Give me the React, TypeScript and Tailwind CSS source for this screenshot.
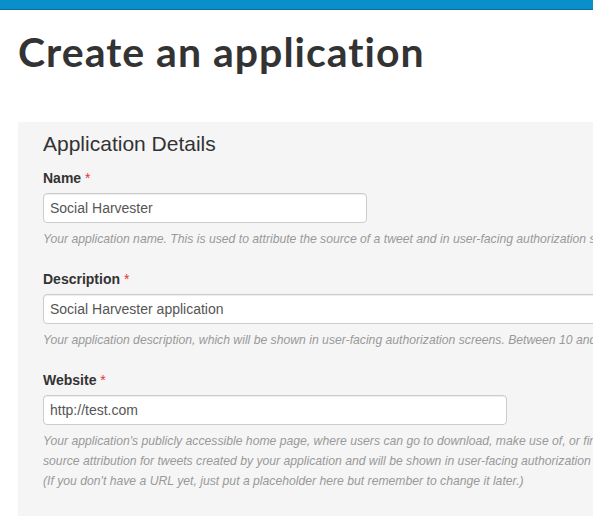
export default function App() {
  const fieldInput =
    "h-[30px] rounded-[4px] border border-[#cccccc] bg-white px-[6px] text-[14px] text-[#555555] shadow-[inset_0_1px_1px_rgba(0,0,0,0.075)] flex items-center";
  const help = "text-[12.2px] italic text-[#999999] leading-[20px] whitespace-nowrap";

  return (
    <div className="w-[593px] h-[516px] overflow-hidden bg-white font-['Liberation_Sans',Arial,sans-serif]">
      {/* top bar */}
      <div className="h-[10px] bg-[#0a90c9] border-b border-[#07719f]" />

      <div className="pl-[18px]">
        <h1 className="pt-[17px] text-[41px] leading-[50px] font-bold text-[#333333] font-['Lato',sans-serif] tracking-[1px]">
          Create an application
        </h1>

        {/* details panel */}
        <div className="mt-[45px] w-[800px] h-[400px] bg-[#f5f5f5] pl-[25px] pt-[10px]">
          <h2 className="text-[21px] leading-[24px] text-[#333333]">Application Details</h2>

          <div className="mt-[12px]">
            <label className="block text-[14px] leading-[20px] font-bold text-[#333333]">
              Name <span className="text-[#e9322d] font-normal">*</span>
            </label>
            <div className={`mt-[5px] w-[324px] ${fieldInput}`}>Social Harvester</div>
            <p className={`mt-[6px] ${help}`}>
              Your application name. This is used to attribute the source of a tweet and in user-facing authorization screens.
            </p>
          </div>

          <div className="mt-[20px]">
            <label className="block text-[14px] leading-[20px] font-bold text-[#333333]">
              Description <span className="text-[#e9322d] font-normal">*</span>
            </label>
            <div className={`mt-[5px] w-[700px] ${fieldInput}`}>Social Harvester application</div>
            <p className={`mt-[6px] ${help}`}>
              Your application description, which will be shown in user-facing authorization screens. Between 10 and 200 characters max.
            </p>
          </div>

          <div className="mt-[20px]">
            <label className="block text-[14px] leading-[20px] font-bold text-[#333333]">
              Website <span className="text-[#e9322d] font-normal">*</span>
            </label>
            <div className={`mt-[5px] w-[464px] ${fieldInput}`}>http://test.com</div>
            <div className="mt-[6px]">
              <p className={help}>
                Your application's publicly accessible home page, where users can go to download, make use of, or find out more information about your application.
              </p>
              <p className={help}>
                source attribution for tweets created by your application and will be shown in user-facing authorization screens.
              </p>
              <p className={help}>
                (If you don't have a URL yet, just put a placeholder here but remember to change it later.)
              </p>
            </div>
          </div>
        </div>
      </div>
    </div>
  );
}
